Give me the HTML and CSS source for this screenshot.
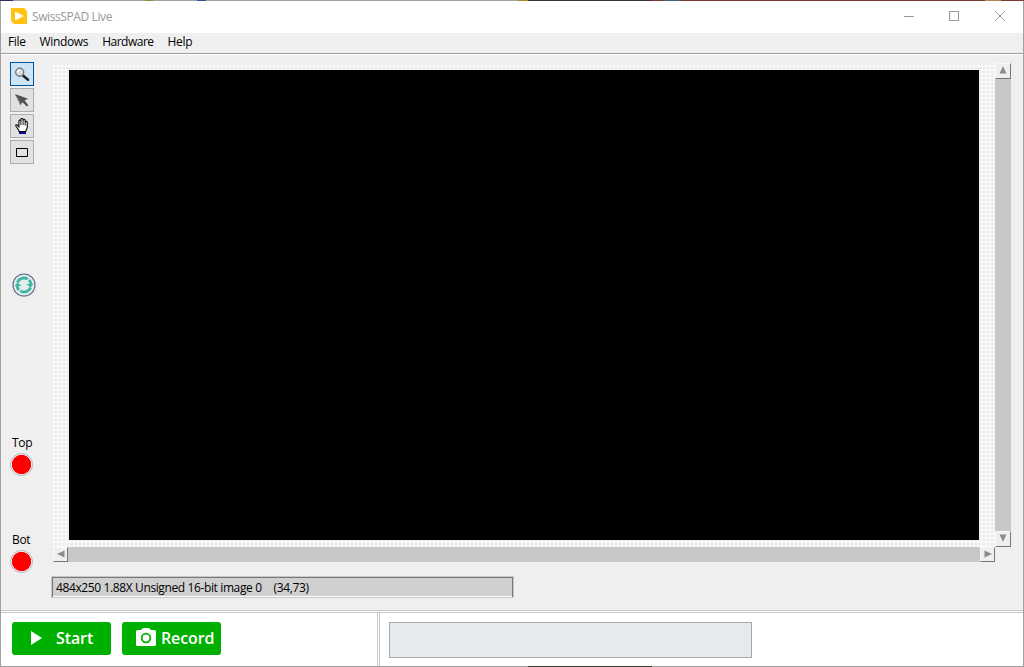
FILE: index.html
```
<!DOCTYPE html>
<html lang="en">
<head>
  <meta charset="UTF-8" />
  <title>SwissSPAD Live</title>
  <link rel="stylesheet" href="styles.css">
</head>
<body>

  <div class="window">
    <div class="titlebar">
      <svg class="app-icon" width="16" height="16" viewBox="0 0 16 16">
        <path d="M0 0h13l3 3v13H3l-3-3z" fill="#ffc20e"/>
        <path d="M4 3.5v9L13 8z" fill="#fff"/>
      </svg>
      <span class="title">SwissSPAD Live</span>
      <svg class="win-buttons" width="102" height="12" viewBox="0 0 102 12" fill="none" stroke="#999">
        <path d="M0 6.5h10M45.5 1.500h9v9h-9z" shape-rendering="crispEdges"/>
        <path d="M91 1l10 10M101 1L91 11"/>
      </svg>
    </div>

    <div class="menubar">
      <span class="m-file">File</span>
      <span class="m-windows">Windows</span>
      <span class="m-hardware">Hardware</span>
      <span class="m-help">Help</span>
    </div>

    <div class="main">
      <div class="side">
        <div class="tools">
          <button class="tool active">
            <svg width="22" height="22" viewBox="0 0 22 22">
              <path d="M12 12.500l5 4.200" stroke="#222" stroke-width="2.600" stroke-linecap="round"/>
              <circle cx="8.700" cy="9.300" r="4" fill="#dcdcdc" stroke="#777" stroke-width="1.400"/>
              <path d="M6.500 9.500q.3-2.300 2.800-2.500" stroke="#fff" stroke-width="1.800" fill="none"/>
            </svg>
          </button>
          <button class="tool">
            <svg width="22" height="22" viewBox="0 0 22 22">
              <path d="M4 5l13 4.800-3.300 1.800 3.600 4.600-1.400 1.400-4.500-4.300-1.900 2.900z" fill="#505050"/>
              <path d="M5 6.500l4.800 8" stroke="#858585"/>
            </svg>
          </button>
          <button class="tool">
            <svg width="22" height="22" viewBox="0 0 22 22">
              <path d="M8 15.500L5 11.300c-.8-1.500.8-2 1.600-1l1.300 1.500V6c0-1.400 2-1.400 2 0V4.500c0-1.400 2.200-1.400 2.200 0v.7c0-1.400 2.100-1.200 2.100.2v1.800c0-1.300 2.100-1.200 2.100.2v5.100l-1.600 4H8z" fill="#fff" stroke="#000" stroke-width="1.100"/>
              <path d="M9.900 6v4M12.100 5v5M14.200 7v3.500" stroke="#000" stroke-width=".9"/>
              <path d="M8 17h7v2H8z" fill="#0a0a96"/>
            </svg>
          </button>
          <button class="tool">
            <svg width="22" height="22" viewBox="0 0 22 22">
              <path d="M5.500 7.500h11v8h-11z" fill="none" stroke="#000"/>
            </svg>
          </button>
        </div>

        <svg class="refresh" width="24" height="24" viewBox="0 0 24 24">
          <circle cx="12" cy="12" r="11" fill="#e6ebef" stroke="#5a6b85" stroke-width="1.100"/>
          <g fill="none" stroke="#3bb8a0" stroke-width="2.800">
            <path d="M5.300 9.500a7.200 7.200 0 0 1 10.500-3.400"/>
            <path d="M17 7a7.200 7.200 0 0 1 2 4"/>
            <path d="M18.700 14.500a7.200 7.200 0 0 1-10.500 3.400"/>
            <path d="M7 17a7.200 7.200 0 0 1-2-4"/>
          </g>
          <path d="M14.500 11h7l-3 3.500zM2.500 13h7L5.500 9.500z" fill="#3bb8a0"/>
        </svg>

        <div class="led-group top">
          <span class="led-label">Top</span>
          <div class="led"></div>
        </div>
        <div class="led-group bot">
          <span class="led-label">Bot</span>
          <div class="led"></div>
        </div>
      </div>

      <div class="display">
        <div class="viewer">
          <div class="canvas">
            <div class="image"></div>
          </div>
          <div class="vscroll">
            <div class="arrow"><svg width="8" height="8" viewBox="0 0 8 8"><path d="M4 0l3.500 7.500h-7z"/></svg></div>
            <div class="arrow"><svg width="8" height="8" viewBox="0 0 8 8"><path d="M.5.500h7L4 8z"/></svg></div>
          </div>
          <div class="hscroll">
            <div class="arrow"><svg width="8" height="8" viewBox="0 0 8 8"><path d="M0 4L7.500.5v7z"/></svg></div>
            <div class="arrow"><svg width="8" height="8" viewBox="0 0 8 8"><path d="M.5.500L8 4 .5 7.500z"/></svg></div>
          </div>
        </div>
        <div class="status"><span class="status-info">484x250 1.88X Unsigned 16-bit image 0</span><span class="status-pos">(34,73)</span></div>
      </div>
    </div>

    <div class="footer">
      <div class="actions">
        <button class="action start">
          <svg width="11" height="14" viewBox="0 0 11 14"><path d="M0 0v14l11-7z" fill="#fff"/></svg>
          <span>Start</span>
        </button>
        <button class="action record">
          <svg width="20" height="18" viewBox="0 0 20 18">
            <path d="M1.500 2H5l2-2h6l2 2h3.500a1.500 1.500 0 0 1 1.500 1.500v13a1.500 1.500 0 0 1-1.500 1.500h-17A1.500 1.500 0 0 1 0 16.500v-13A1.500 1.500 0 0 1 1.500 2z" fill="#fff"/>
            <circle cx="10" cy="10" r="4.300" fill="none" stroke="#00b000" stroke-width="1.800"/>
          </svg>
          <span>Record</span>
        </button>
      </div>
      <div class="message">
        <div class="message-box"></div>
      </div>
    </div>
  </div>

</body>
</html>
```
FILE: styles.css
```
* {
  box-sizing: border-box;
}

body {
  margin: 0;
  height: 667px;
  overflow: hidden;
  font-family: "Open Sans", "Noto Sans", sans-serif;
  font-size: 12px;
  color: #000;
  background: #a0a0a0;
}

svg {
  display: block;
}

button {
  padding: 0;
  font-family: inherit;
}

/* desktop shows through along the top and bottom edge */
.window {
  display: flex;
  flex-direction: column;
  height: 667px;
  padding: 1px;
  background:
    linear-gradient(90deg, #2d2d66 13px, #a0a0a0 13px 145px, #8f8a30 145px 153px, #a0a0a0 153px 197px, #2f5591 197px 206px, #a0a0a0 206px 518px, #a98b28 518px 528px, #3a3638 528px 652px, #7d3c30 652px 665px, #3d6690 665px 679px, #7d3c30 679px 985px, #a98b50 985px 1001px, #7d3c30 1001px) top / 100% 1px no-repeat,
    linear-gradient(90deg, transparent 528px, #3a3835 528px 652px, transparent 652px) bottom / 100% 1px no-repeat,
    #a0a0a0;
}

.titlebar {
  display: flex;
  align-items: center;
  height: 32px;
  padding: 0 17px 2px 10px;
  background: #fff;
}

.title {
  margin-left: 5px;
  color: #999;
  letter-spacing: -0.4px;
}

.win-buttons {
  margin-left: auto;
}

.menubar {
  display: flex;
  gap: 14px;
  height: 21px;
  padding-left: 7px;
  line-height: 18px;
  letter-spacing: -0.35px;
  border-bottom: 1px solid #a0a0a0;
  background: #efefef;
}

.m-hardware {
  letter-spacing: -0.5px;
}

.main {
  display: flex;
  height: 556px;
  border-top: 1px solid #fff;
  background: #efefef;
}

.side {
  width: 50px;
  padding: 7px 0 0 9px;
}

.tools {
  display: flex;
  flex-direction: column;
  gap: 2px;
}

.tool {
  width: 24px;
  height: 24px;
  border: 1px solid #adadad;
  background: #e1e1e1;
}

.tool.active {
  border-color: #005499;
  background: #cce4f7;
}

.refresh {
  margin: 109px 0 0 1.5px;
}

.led-group {
  height: 97px;
}

.led-group.top {
  margin-top: 138px;
}

.led-label {
  display: block;
  height: 18px;
  margin-left: 2px;
  line-height: 16px;
  letter-spacing: -0.3px;
}

.led {
  width: 23px;
  height: 23px;
  border: 1px solid #b4b4bc;
  border-radius: 50%;
  background: radial-gradient(circle, #f00 9.2px, #f4f4f4 10px);
}

.display {
  width: 962px;
  padding: 8px 0 0 2px;
}

.viewer {
  display: grid;
  grid-template-columns: 942px 16px;
  grid-template-rows: 484px 15px;
}

.canvas {
  margin-top: 2px;
  padding: 5px 0 0 16px;
  background: conic-gradient(from 270deg at 2px 2px, #fff 90deg, transparent 0) 0 0 / 4px 4px;
}

.image {
  width: 910px;
  height: 470px;
  background: #000;
}

.vscroll,
.hscroll {
  display: flex;
  justify-content: space-between;
  background: #c8c8c8;
}

.vscroll {
  flex-direction: column;
}

.arrow {
  display: flex;
  align-items: center;
  justify-content: center;
  width: 15px;
  height: 15px;
  border: 1px solid #f8f8f8;
  border-right-color: #777;
  border-bottom-color: #777;
  background: #efefef;
}

.vscroll .arrow {
  width: 16px;
  height: 16px;
  padding-bottom: 2px;
}

.hscroll .arrow {
  padding-bottom: 1px;
}

.arrow path {
  fill: #8c8c8c;
}

.status {
  display: flex;
  gap: 12px;
  width: 463px;
  height: 22px;
  margin: 14px 0 0 -2px;
  padding-left: 4px;
  line-height: 22px;
  letter-spacing: -0.38px;
  white-space: nowrap;
  border: 1px solid #c8c8c8;
  background: #d0d0d0;
  box-shadow: inset 1px 1px #777, inset -1px 0 #777, inset 0 -1px #fff;
}

.footer {
  display: flex;
  flex: 1;
  border-top: 3px double #c8c8c8;
  background: #fff;
}

.actions {
  display: flex;
  gap: 11px;
  width: 379px;
  padding: 9px 0 0 11px;
  border-right: 3px double #c8c8c8;
}

.action {
  display: flex;
  align-items: center;
  width: 99px;
  height: 33px;
  color: #fff;
  font-size: 16px;
  font-weight: 600;
  letter-spacing: -0.1px;
  border: none;
  border-radius: 3px;
  background: #00b000;
}

.action span {
  padding-bottom: 2px;
}

.start {
  padding-left: 19px;
  gap: 14px;
}

.start svg {
  margin-top: -1px;
}

.record {
  padding-left: 14px;
  gap: 5px;
}

.record svg {
  margin-top: -3px;
}

.message {
  padding: 9px 0 0 9px;
}

.message-box {
  width: 363px;
  height: 36px;
  border: 1px solid #a3a9ac;
  background: #e6eaed;
}
```
